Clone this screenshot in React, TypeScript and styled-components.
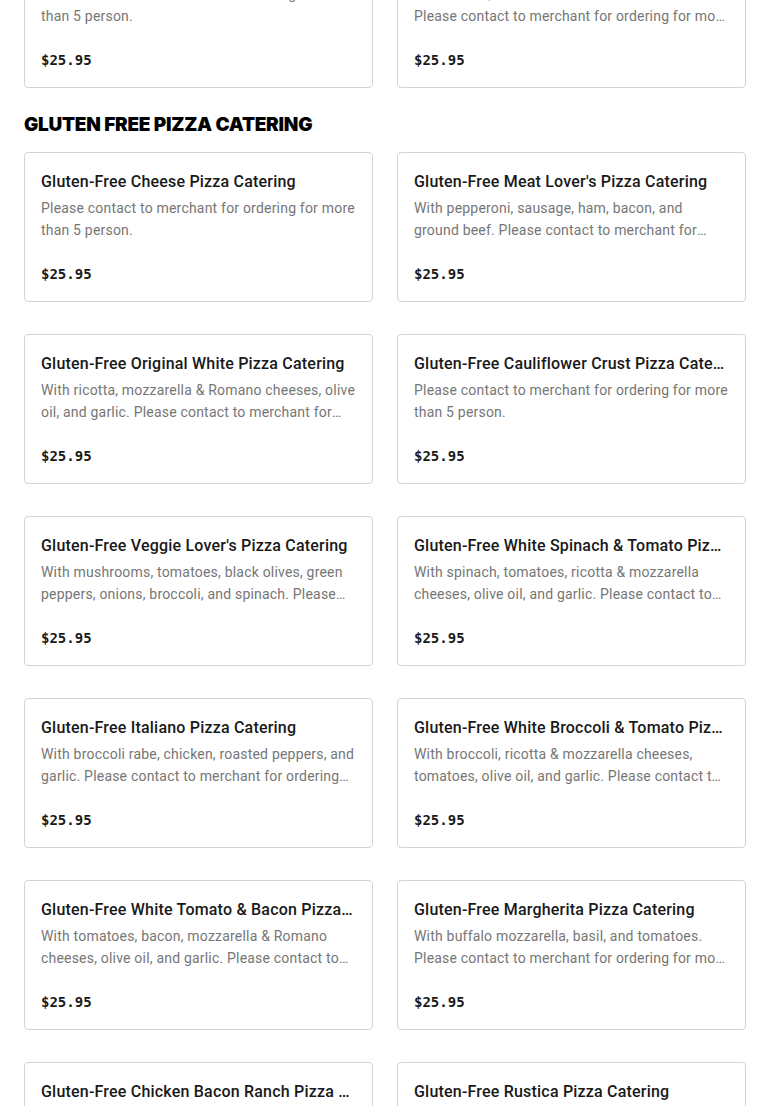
import React from "react";
import styled, { createGlobalStyle } from "styled-components";

const GlobalStyle = createGlobalStyle`
  html, body { margin: 0; padding: 0; background: #ffffff; }
  body { font-family: "Roboto", "Liberation Sans", sans-serif; color: #191919; }
  * { box-sizing: border-box; }
`;

const Page = styled.main`
  margin-top: -62px;
  padding: 0 24px;
  display: flex;
  flex-direction: column;
`;

const Section = styled.section`
  display: flex;
  flex-direction: column;
`;

const Heading = styled.h2`
  margin: 24px 0 16px;
  padding-top: 1px;
  font-family: "Inter", "Liberation Sans", sans-serif;
  font-size: 19px;
  line-height: 23px;
  font-weight: 900;
  letter-spacing: -0.25px;
  text-transform: uppercase;
  color: #000000;
`;

const Grid = styled.div`
  display: grid;
  grid-template-columns: 1fr 1fr;
  column-gap: 24px;
  row-gap: 32px;
`;

const Card = styled.article`
  height: 150px;
  border: 1px solid #d3d3d3;
  border-radius: 4px;
  padding: 17px 16px 0;
  display: flex;
  flex-direction: column;
  min-width: 0;
  background: #fff;
`;

const Title = styled.h3`
  margin: 0 0 3px;
  font-family: "Roboto", "Liberation Sans", sans-serif;
  font-size: 16px;
  line-height: 24px;
  font-weight: 500;
  letter-spacing: 0.2px;
  color: #191919;
  white-space: nowrap;
  overflow: hidden;
  text-overflow: ellipsis;
`;

const Description = styled.p`
  margin: 0;
  font-family: "Roboto", "Liberation Sans", sans-serif;
  font-size: 14px;
  line-height: 22px;
  font-weight: 400;
  letter-spacing: 0.2px;
  color: #767676;
  height: 44px;
  display: -webkit-box;
  -webkit-line-clamp: 2;
  -webkit-box-orient: vertical;
  overflow: hidden;
`;

const Price = styled.span`
  margin-top: 23px;
  font-family: "DejaVu Sans Mono", "Liberation Mono", monospace;
  font-size: 14px;
  line-height: 20px;
  font-weight: 700;
  color: #191919;
`;

type Item = { title: string; desc: string };

const MORE = "Please contact to merchant for ordering for more than 5 person.";

const previous: Item[] = [
  { title: "Veggie Lover's Pizza Catering", desc: "Please contact to merchant for ordering for more than 5 person." },
  { title: "White Spinach & Tomato Pizza Catering", desc: "With ricotta, mozzarella & Romano cheeses. " + MORE },
];

const glutenFree: Item[] = [
  { title: "Gluten-Free Cheese Pizza Catering", desc: MORE },
  { title: "Gluten-Free Meat Lover's Pizza Catering", desc: "With pepperoni, sausage, ham, bacon, and ground beef. " + MORE },
  { title: "Gluten-Free Original White Pizza Catering", desc: "With ricotta, mozzarella & Romano cheeses, olive oil, and garlic. " + MORE },
  { title: "Gluten-Free Cauliflower Crust Pizza Catering", desc: MORE },
  { title: "Gluten-Free Veggie Lover's Pizza Catering", desc: "With mushrooms, tomatoes, black olives, green peppers, onions, broccoli, and spinach. " + MORE },
  { title: "Gluten-Free White Spinach & Tomato Pizza Catering", desc: "With spinach, tomatoes, ricotta & mozzarella cheeses, olive oil, and garlic. " + MORE },
  { title: "Gluten-Free Italiano Pizza Catering", desc: "With broccoli rabe, chicken, roasted peppers, and garlic. " + MORE },
  { title: "Gluten-Free White Broccoli & Tomato Pizza Catering", desc: "With broccoli, ricotta & mozzarella cheeses, tomatoes, olive oil, and garlic. " + MORE },
  { title: "Gluten-Free White Tomato & Bacon Pizza Catering", desc: "With tomatoes, bacon, mozzarella & Romano cheeses, olive oil, and garlic. " + MORE },
  { title: "Gluten-Free Margherita Pizza Catering", desc: "With buffalo mozzarella, basil, and tomatoes. " + MORE },
  { title: "Gluten-Free Chicken Bacon Ranch Pizza Catering", desc: "With chicken, bacon, and ranch dressing. " + MORE },
  { title: "Gluten-Free Rustica Pizza Catering", desc: MORE },
];

const MenuCard = ({ item }: { item: Item }) => (
  <Card>
    <Title>{item.title}</Title>
    <Description>{item.desc}</Description>
    <Price>$25.95</Price>
  </Card>
);

export default function App() {
  return (
    <>
      <GlobalStyle />
      <Page>
        <Grid>
          {previous.map((it) => (
            <MenuCard key={it.title} item={it} />
          ))}
        </Grid>
        <Section>
          <Heading>Gluten Free Pizza Catering</Heading>
          <Grid>
            {glutenFree.map((it) => (
              <MenuCard key={it.title} item={it} />
            ))}
          </Grid>
        </Section>
      </Page>
    </>
  );
}
